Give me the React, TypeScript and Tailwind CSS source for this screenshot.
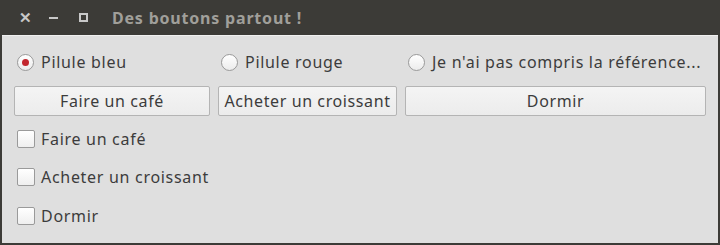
import React from "react";

const font = { fontFamily: '"Noto Sans", "Open Sans", sans-serif' };

function Radio({ checked, label }: { checked?: boolean; label: string }) {
  return (
    <div className="flex items-center h-[20px] pl-[3px]">
      <div className="w-[17px] h-[17px] rounded-full border border-[#9a9a9a] bg-gradient-to-b from-[#ffffff] to-[#ececec] flex items-center justify-center shrink-0">
        {checked && <div className="w-[7px] h-[7px] rounded-full bg-[#c2262e]" />}
      </div>
      <span className="ml-[7px] text-[16px] tracking-[0.7px] text-[#3c3c3c] whitespace-nowrap">{label}</span>
    </div>
  );
}

function Check({ label }: { label: string }) {
  return (
    <div className="flex items-center h-[20px] pl-[3px]">
      <div className="w-[18px] h-[18px] rounded-[2px] border border-[#9a9a9a] bg-gradient-to-b from-[#ffffff] to-[#efefef] shrink-0" />
      <span className="ml-[6px] text-[16px] tracking-[0.7px] text-[#3c3c3c] whitespace-nowrap">{label}</span>
    </div>
  );
}

function Btn({ label }: { label: string }) {
  return (
    <div className="h-[30px] flex items-center justify-center rounded-[2px] border border-[#b4b4b4] bg-gradient-to-b from-[#f4f4f4] to-[#ececec] text-[16px] tracking-[0.6px] text-[#3c3c3c] whitespace-nowrap">
      {label}
    </div>
  );
}

export default function App() {
  return (
    <div className="w-[720px] h-[245px] flex flex-col bg-[#3c3b37]" style={font}>
      <div className="h-[35px] flex items-center shrink-0">
        <span className="ml-[19px] text-[#c8c8c8] text-[15px] font-bold leading-none">✕</span>
        <div className="ml-[17px] w-[9px] h-[2px] bg-[#c8c8c8]" />
        <div className="ml-[21px] w-[9px] h-[9px] border-2 border-[#c8c8c8]" />
        <span className="ml-[24px] text-[#a09f9a] text-[16px] tracking-[0.8px] font-bold">Des boutons partout !</span>
      </div>
      <div className="flex-1 mx-[2px] mb-[2px] bg-[#dfdfdf] border-t border-[#f0f0f0]">
        <div className="pl-[12px] pt-[16px]">
          <div className="grid grid-cols-[196px_179px_301px] gap-x-[8px]">
            <Radio checked label="Pilule bleu" />
            <Radio label="Pilule rouge" />
            <Radio label="Je n'ai pas compris la référence..." />
          </div>
          <div className="grid grid-cols-[196px_179px_301px] gap-x-[8px] mt-[14px]">
            <Btn label="Faire un café" />
            <Btn label="Acheter un croissant" />
            <Btn label="Dormir" />
          </div>
          <div className="mt-[13px]">
            <Check label="Faire un café" />
          </div>
          <div className="mt-[18px]">
            <Check label="Acheter un croissant" />
          </div>
          <div className="mt-[19px]">
            <Check label="Dormir" />
          </div>
        </div>
      </div>
    </div>
  );
}
